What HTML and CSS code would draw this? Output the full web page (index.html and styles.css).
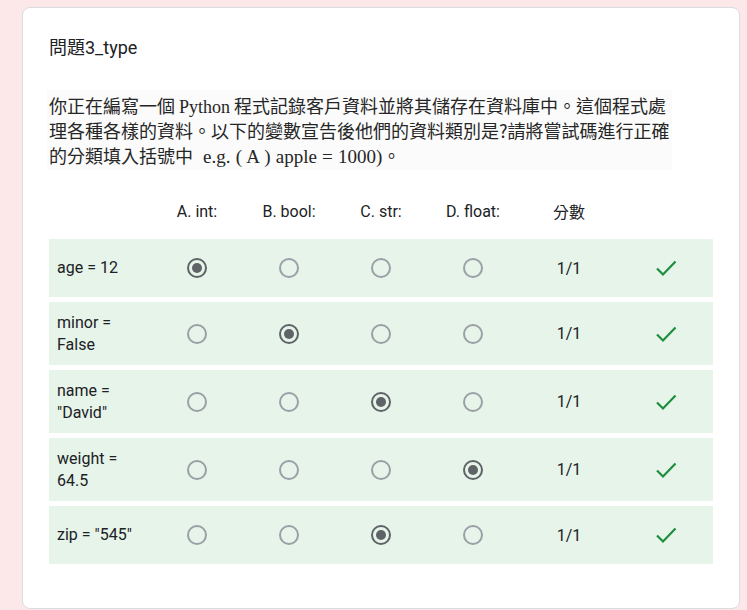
FILE: index.html
```html
<!DOCTYPE html>
<html lang="zh-Hant">
<head>
<meta charset="utf-8">
<title>問題3_type</title>
<link rel="stylesheet" href="styles.css">
</head>
<body>
<div class="card">
  <div class="title">問題3_type</div>
  <div class="desc">
    <div class="line">你正在編寫一個 <span class="serif">Python</span> 程式記錄客戶資料並將其儲存在資料庫中。這個程式處</div>
    <div class="line">理各種各樣的資料。以下的變數宣告後他們的資料類別是?請將嘗試碼進行正確</div>
    <div class="line">的分類填入括號中<span class="serif math">e.g. ( A ) apple = 1000)</span>。</div>
  </div>

  <div class="grid-head">
    <div></div>
    <div class="hcell">A. int:</div>
    <div class="hcell">B. bool:</div>
    <div class="hcell">C. str:</div>
    <div class="hcell">D. float:</div>
    <div class="hcell">分數</div>
    <div></div>
  </div>

  <div class="rows">
    <div class="row">
      <div class="label">age = 12</div>
      <div class="cell"><span class="radio on"></span></div>
      <div class="cell"><span class="radio"></span></div>
      <div class="cell"><span class="radio"></span></div>
      <div class="cell"><span class="radio"></span></div>
      <div class="cell score">1/1</div>
      <div class="cell"><svg class="check" viewBox="0 0 22 18"><polyline points="2,9.5 8,15.5 20.5,2.5"/></svg></div>
    </div>
    <div class="row">
      <div class="label">minor =<br>False</div>
      <div class="cell"><span class="radio"></span></div>
      <div class="cell"><span class="radio on"></span></div>
      <div class="cell"><span class="radio"></span></div>
      <div class="cell"><span class="radio"></span></div>
      <div class="cell score">1/1</div>
      <div class="cell"><svg class="check" viewBox="0 0 22 18"><polyline points="2,9.5 8,15.5 20.5,2.5"/></svg></div>
    </div>
    <div class="row">
      <div class="label">name =<br>"David"</div>
      <div class="cell"><span class="radio"></span></div>
      <div class="cell"><span class="radio"></span></div>
      <div class="cell"><span class="radio on"></span></div>
      <div class="cell"><span class="radio"></span></div>
      <div class="cell score">1/1</div>
      <div class="cell"><svg class="check" viewBox="0 0 22 18"><polyline points="2,9.5 8,15.5 20.5,2.5"/></svg></div>
    </div>
    <div class="row">
      <div class="label">weight =<br>64.5</div>
      <div class="cell"><span class="radio"></span></div>
      <div class="cell"><span class="radio"></span></div>
      <div class="cell"><span class="radio"></span></div>
      <div class="cell"><span class="radio on"></span></div>
      <div class="cell score">1/1</div>
      <div class="cell"><svg class="check" viewBox="0 0 22 18"><polyline points="2,9.5 8,15.5 20.5,2.5"/></svg></div>
    </div>
    <div class="row">
      <div class="label">zip = "545"</div>
      <div class="cell"><span class="radio"></span></div>
      <div class="cell"><span class="radio"></span></div>
      <div class="cell"><span class="radio on"></span></div>
      <div class="cell"><span class="radio"></span></div>
      <div class="cell score">1/1</div>
      <div class="cell"><svg class="check" viewBox="0 0 22 18"><polyline points="2,9.5 8,15.5 20.5,2.5"/></svg></div>
    </div>
  </div>
</div>
</body>
</html>
```

FILE: styles.css
```css
html, body {
  margin: 0;
  padding: 0;
}
body {
  background: #fce8e8;
  padding: 7px 7px 0 22px;
  font-family: Roboto, "Noto Sans CJK TC", sans-serif;
  color: #202124;
}
.card {
  background: #fff;
  border: 1px solid #dadce0;
  border-radius: 8px;
  padding: 28px 26px 42px 26px;
  height: 530px;
}
.title {
  font-size: 18px;
  line-height: 24px;
}
.desc {
  margin-top: 30px;
  width: 623px;
  margin-left: -2px;
  padding: 3px 0 2px 2px;
  background: #fbfbfb;
  font-family: "Noto Sans CJK TC", sans-serif;
  font-size: 18px;
  color: #262626;
}
.line {
  white-space: nowrap;
  height: 25px;
  line-height: 25px;
  overflow: visible;
}
.serif {
  font-family: "Liberation Serif", serif;
  line-height: 1;
}
.math {
  font-size: 19px;
  word-spacing: 0.5px;
  margin-left: 10px;
}
.grid-head,
.row {
  display: grid;
  grid-template-columns: 102px 92px 92px 92px 92px 100px 94px;
}
.grid-head {
  margin-top: 21px;
  height: 40px;
  align-items: center;
  margin-bottom: 8px;
  font-size: 16px;
}
.hcell {
  text-align: center;
}
.rows {
  display: flex;
  flex-direction: column;
  gap: 5px;
}
.row {
  background: #e6f4ea;
  min-height: 58px;
  align-items: center;
  box-sizing: border-box;
  padding: 9.5px 0;
}
.label {
  padding-left: 8px;
  font-size: 16px;
  line-height: 22px;
}
.cell {
  display: flex;
  justify-content: center;
  align-items: center;
}
.score {
  font-size: 16px;
}
.radio {
  width: 20px;
  height: 20px;
  box-sizing: border-box;
  border: 2px solid #9aa0a6;
  border-radius: 50%;
  display: flex;
  align-items: center;
  justify-content: center;
}
.radio.on {
  border-color: #5f6368;
}
.radio.on::after {
  content: "";
  width: 10px;
  height: 10px;
  border-radius: 50%;
  background: #5f6368;
}
.check {
  width: 22px;
  height: 18px;
}
.check polyline {
  fill: none;
  stroke: #1e8e3e;
  stroke-width: 2.2;
}
```
